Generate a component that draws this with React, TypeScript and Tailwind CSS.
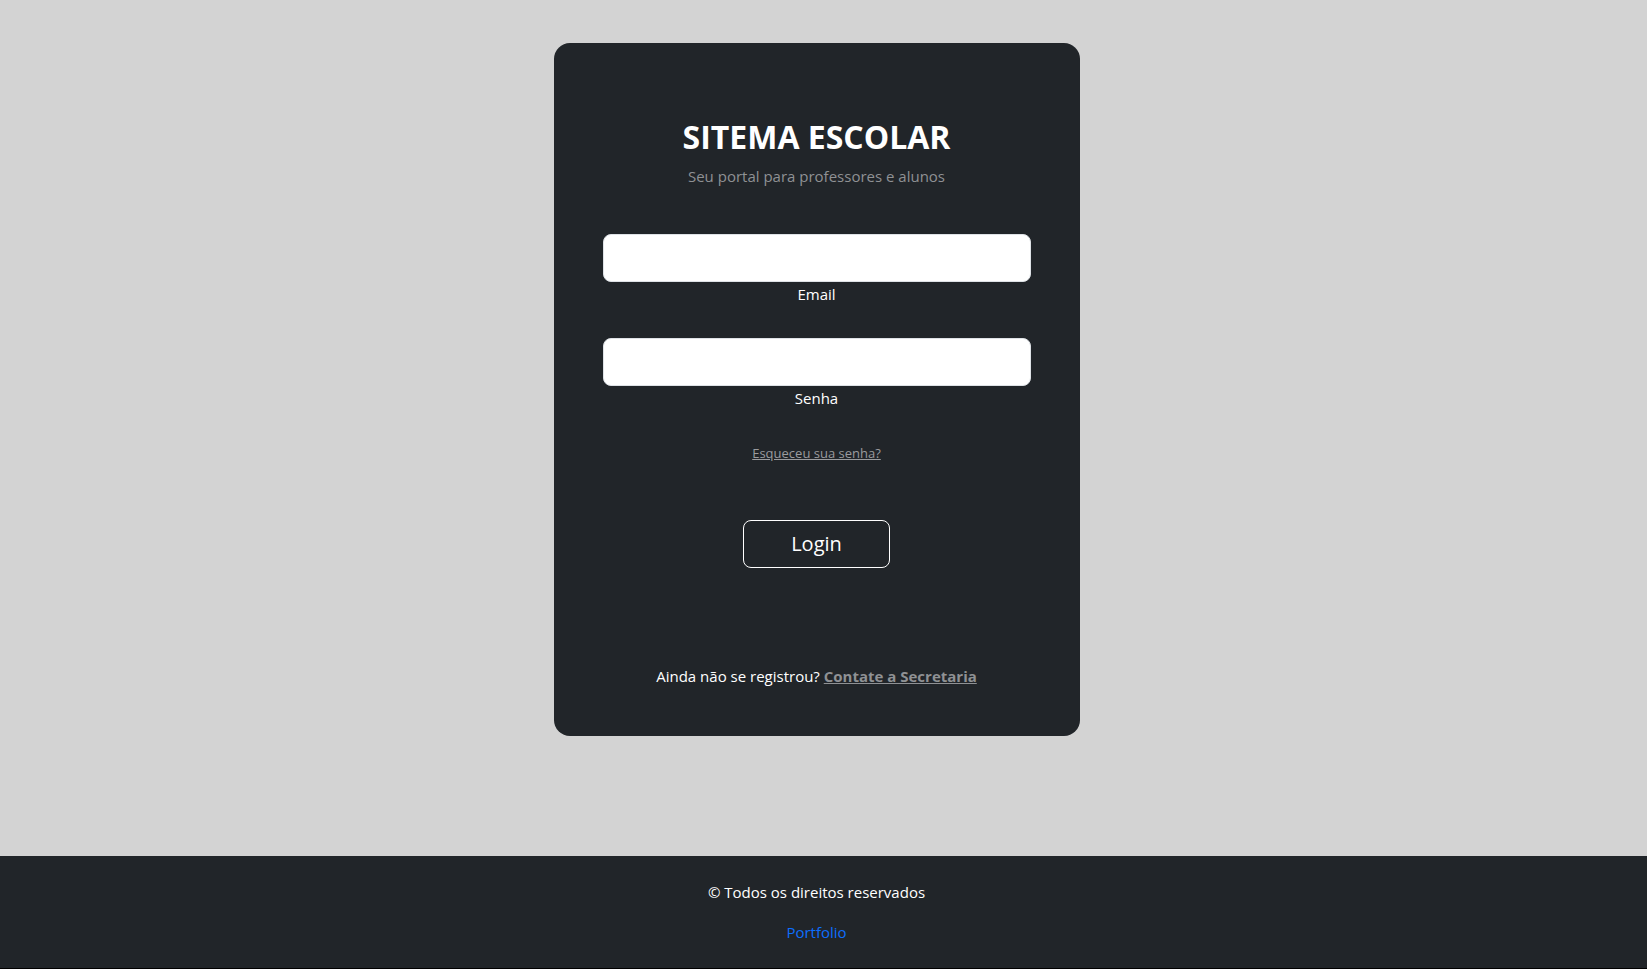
import React from "react";

export default function App() {
  return (
    <div className="font-['Segoe_UI','Open_Sans',sans-serif]">
      <main className="h-[856px] bg-[#d3d3d3] pt-[43px] flex justify-center pr-[14px]">
        <div className="w-[526px] h-[693px] bg-[#212529] rounded-[16px] px-[49px] pt-[75px] pb-[48px] flex flex-col items-center text-center">
          <h2 className="text-[32px] leading-[38.4px] font-bold text-white mb-[8px]">SITEMA ESCOLAR</h2>
          <p className="text-[15px] leading-[24px] text-[#8f9194] mb-[46px]">Seu portal para professores e alunos</p>

          <div className="w-full mb-[32px]">
            <input type="email" className="block w-full h-[48px] bg-white border border-[#dee2e6] rounded-[8px] px-4 text-[20px] outline-none" />
            <label className="block text-[15px] leading-[24px] text-white">Email</label>
          </div>
          <div className="w-full">
            <input type="password" className="block w-full h-[48px] bg-white border border-[#dee2e6] rounded-[8px] px-4 text-[20px] outline-none" />
            <label className="block text-[15px] leading-[24px] text-white">Senha</label>
          </div>

          <a href="#" className="mt-[33px] text-[13px] leading-[21px] text-[#9a9b9e] underline">Esqueceu sua senha?</a>

          <button className="mt-[56px] h-[48px] px-[47px] border border-white rounded-[8px] text-white text-[20px] leading-[30px] bg-transparent">
            Login
          </button>

          <p className="mt-auto text-[15px] leading-[24px] text-white">
            Ainda não se registrou?{" "}
            <a href="#" className="font-bold text-[#8f9194] underline">Contate a Secretaria</a>
          </p>
        </div>
      </main>
      <footer className="h-[113px] bg-[#212529] border-b border-black pt-[24px] pr-[14px] flex flex-col items-center">
        <p className="text-[15px] leading-[24px] text-white mb-[16px]">© Todos os direitos reservados</p>
        <a href="#" className="text-[15px] leading-[24px] text-[#0d6efd]">Portfolio</a>
      </footer>
    </div>
  );
}
